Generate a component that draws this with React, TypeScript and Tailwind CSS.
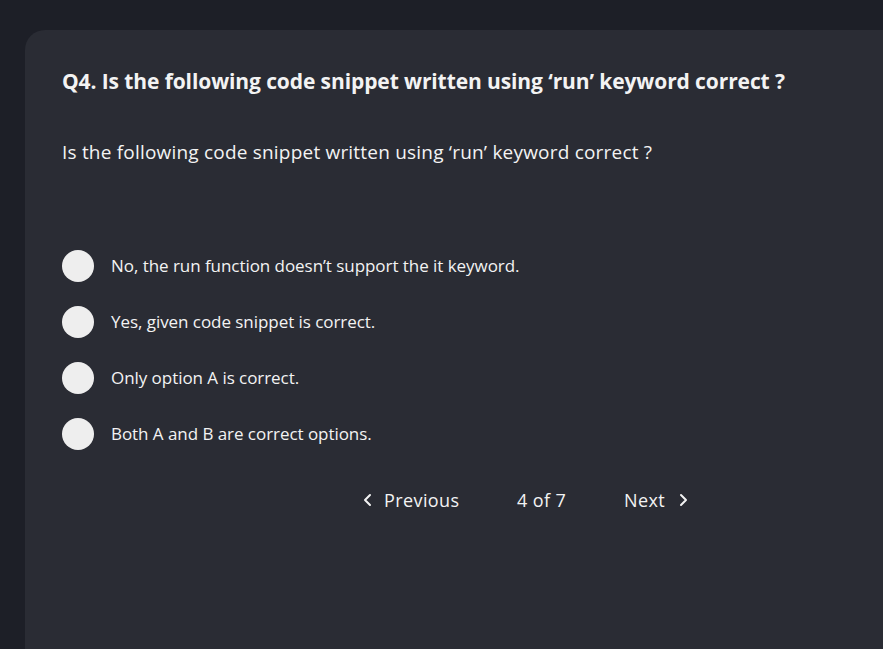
import React from "react";

const options = [
  "No, the run function doesn\u2019t support the it keyword.",
  "Yes, given code snippet is correct.",
  "Only option A is correct.",
  "Both A and B are correct options.",
];

export default function App() {
  return (
    <div
      className="w-[883px] h-[649px] overflow-hidden bg-[#1d1f27] pt-[30px] pl-[25px]"
      style={{ fontFamily: "'Open Sans', 'Noto Sans', sans-serif" }}
    >
      <div className="w-[900px] h-[700px] rounded-tl-[20px] bg-[#2a2c34] pl-[37px] pt-[38px] text-[#f3f3f3]">
        <h1 className="text-[21px] font-bold leading-[26px] tracking-[-0.1px]">
          Q4. Is the following code snippet written using &#8216;run&#8217; keyword correct ?
        </h1>
        <p className="mt-[46px] text-[19px] leading-[24px] tracking-[0.2px]">
          Is the following code snippet written using &#8216;run&#8217; keyword correct ?
        </p>
        <div className="mt-[86px] flex flex-col gap-[24px]">
          {options.map((o) => (
            <div key={o} className="flex items-center gap-[17px] h-[32px]">
              <div className="w-[32px] h-[32px] rounded-full bg-[#eeeeee]" />
              <span className="text-[17px] tracking-[-0.05px]">{o}</span>
            </div>
          ))}
        </div>
        <div className="mt-[36px] ml-[300px] flex items-center text-[18px] h-[28px] tracking-[0.4px]">
          <div className="flex items-center gap-[10px] w-[155px]">
            <svg width="12" height="14" viewBox="0 0 12 14" fill="none">
              <path d="M8 2 L3 7 L8 12" stroke="#f3f3f3" strokeWidth="2" strokeLinecap="round" strokeLinejoin="round" />
            </svg>
            <span>Previous</span>
          </div>
          <span className="w-[107px]">4 of 7</span>
          <div className="flex items-center gap-[12px]">
            <span>Next</span>
            <svg width="12" height="14" viewBox="0 0 12 14" fill="none">
              <path d="M4 2 L9 7 L4 12" stroke="#f3f3f3" strokeWidth="2" strokeLinecap="round" strokeLinejoin="round" />
            </svg>
          </div>
        </div>
      </div>
    </div>
  );
}
